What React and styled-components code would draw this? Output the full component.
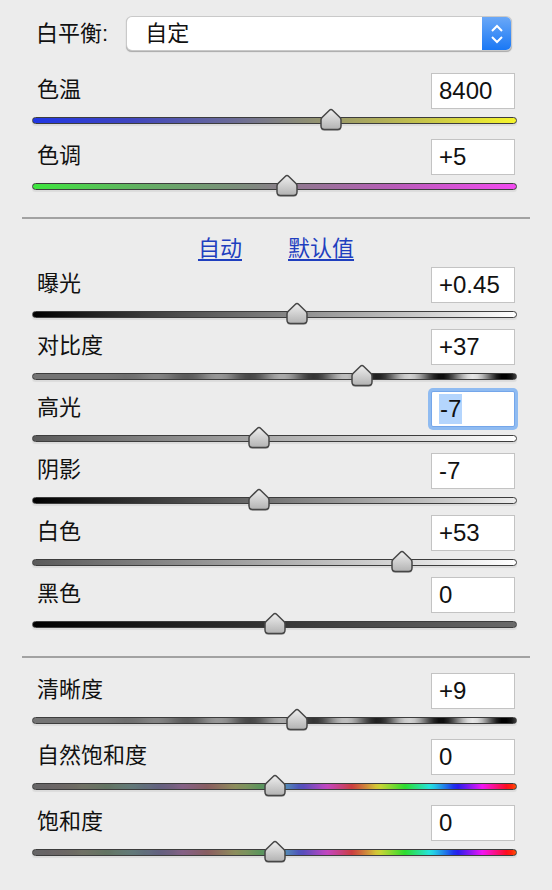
import styled, { createGlobalStyle } from "styled-components";

const GlobalStyle = createGlobalStyle`
  html, body {
    margin: 0;
    padding: 0;
    background: #ececec;
  }
  body {
    font-family: "Liberation Sans", "Noto Sans CJK SC", sans-serif;
    color: #111;
  }
`;

// stripes that get stronger toward the right (contrast / clarity)
const stripeTrack = () => {
  const stops = [];
  for (let i = 0; i <= 100; i++) {
    const t = i / 100;
    const amp = Math.max(0, t - 0.15) * 150;
    let v = 116 + amp * Math.cos((2 * Math.PI * (t - 0.25)) / 0.132);
    v = Math.round(Math.min(255, Math.max(0, v)));
    stops.push(`rgb(${v},${v},${v}) ${i}%`);
  }
  return `linear-gradient(to right, ${stops.join(", ")})`;
};

// muted hues on the left, full rainbow on the right (vibrance / saturation)
const hueTrack = () => {
  const stops = [];
  for (let i = 0; i <= 100; i++) {
    const t = i / 100;
    let hue, sat, light;
    if (t < 0.5) {
      hue = 220 + (t - 0.24) * 1125;
      sat = t * 50;
      light = 40 + t * 15;
    } else {
      hue = 225 + (t - 0.54) * 1114;
      sat = Math.min(100, 40 + (t - 0.52) * 125);
      light = 52;
    }
    hue = ((hue % 360) + 360) % 360;
    stops.push(`hsl(${hue.toFixed(0)}, ${sat.toFixed(0)}%, ${light.toFixed(0)}%) ${i}%`);
  }
  return `linear-gradient(to right, ${stops.join(", ")})`;
};

const temp =
  "linear-gradient(to right, #2137e4 0%, #3f45bf 20%, #6c6c96 42%, #8a8a78 55%, #b0ae58 72%, #f6f52c 100%)";
const tint =
  "linear-gradient(to right, #3fe63f 0%, #62b062 22%, #7f8a7f 45%, #917891 55%, #b95cb9 75%, #f24bf0 100%)";
const stripes = stripeTrack();
const hues = hueTrack();

const basicRows = [
  { label: "色温", value: "8400", pos: 0.616, track: temp },
  { label: "色调", value: "+5", pos: 0.526, track: tint },
];

const toneRows = [
  { label: "曝光", value: "+0.45", pos: 0.546, track: "linear-gradient(to right, #000, #fff)" },
  { label: "对比度", value: "+37", pos: 0.682, track: stripes },
  { label: "高光", value: "-7", pos: 0.468, track: "linear-gradient(to right, #5a5a5a, #fff)", focused: true },
  { label: "阴影", value: "-7", pos: 0.468, track: "linear-gradient(to right, #000, #ececec)" },
  { label: "白色", value: "+53", pos: 0.763, track: "linear-gradient(to right, #5a5a5a, #fff)" },
  { label: "黑色", value: "0", pos: 0.501, track: "linear-gradient(to right, #000, #6a6a6a)" },
];

const presenceRows = [
  { label: "清晰度", value: "+9", pos: 0.546, track: stripes },
  { label: "自然饱和度", value: "0", pos: 0.501, track: hues },
  { label: "饱和度", value: "0", pos: 0.501, track: hues },
];

const ThumbIcon = () => (
  <svg width="24" height="26" viewBox="0 0 24 26">
    <defs>
      <linearGradient id="thumbFill" x1="0" y1="0" x2="0" y2="1">
        <stop offset="0" stopColor="#efefef" />
        <stop offset="1" stopColor="#b2b2b2" />
      </linearGradient>
    </defs>
    <path
      d="M12 3C12.8 3 13.3 3.5 13.8 4L21 11Q22 12 22 13.5V19.5Q22 23 18.5 23H5.5Q2 23 2 19.5V13.5Q2 12 3 11L10.2 4C10.7 3.5 11.2 3 12 3Z"
      fill="rgba(0,0,0,0.22)"
    />
    <path
      d="M12 1.5C12.8 1.5 13.3 2 13.8 2.5L21 9.5Q22 10.5 22 12V18Q22 21.5 18.5 21.5H5.5Q2 21.5 2 18V12Q2 10.5 3 9.5L10.2 2.5C10.7 2 11.2 1.5 12 1.5Z"
      fill="url(#thumbFill)"
      stroke="#464646"
      strokeWidth="1.5"
    />
  </svg>
);

const SliderRow = ({ label, value, pos, track, focused }) => (
  <Row>
    <RowTop>
      <Label>{label}</Label>
      <ValueBox $focused={focused}>
        {focused ? <Selected>{value}</Selected> : value}
      </ValueBox>
    </RowTop>
    <Track $bg={track}>
      <Thumb style={{ left: `calc(${pos * 100}% - 12px)` }}>
        <ThumbIcon />
      </Thumb>
    </Track>
  </Row>
);

const App = () => (
  <Page>
    <GlobalStyle />
    <Header>
      <HeaderLabel>白平衡:</HeaderLabel>
      <Select>
        <SelectValue>自定</SelectValue>
        <Stepper>
          <svg width="12" height="20" viewBox="0 0 12 20">
            <polyline points="1,7 6,2 11,7" fill="none" stroke="#fff" strokeWidth="2" />
            <polyline points="1,13 6,18 11,13" fill="none" stroke="#fff" strokeWidth="2" />
          </svg>
        </Stepper>
      </Select>
    </Header>

    <Section $gap={15} $top={23}>
      {basicRows.map((r) => (
        <SliderRow key={r.label} {...r} />
      ))}
    </Section>

    <Divider $top={27} />

    <Links>
      <LinkText>自动</LinkText>
      <LinkText>默认值</LinkText>
    </Links>

    <Section $gap={11}>
      {toneRows.map((r) => (
        <SliderRow key={r.label} {...r} />
      ))}
    </Section>

    <Divider $top={28} />

    <Section $gap={15} $top={15}>
      {presenceRows.map((r) => (
        <SliderRow key={r.label} {...r} />
      ))}
    </Section>
  </Page>
);

export default App;

const Page = styled.div`
  width: 552px;
  box-sizing: border-box;
  padding: 17px 22px 40px;
`;

const Header = styled.div`
  display: flex;
  align-items: center;
  gap: 19px;
  padding: 0 19px 0 14px;
  height: 33px;
`;

const HeaderLabel = styled.span`
  font-size: 22px;
  line-height: 1;
`;

const Select = styled.div`
  flex: 1;
  height: 33px;
  display: flex;
  align-items: center;
  background: #fff;
  border-radius: 5px;
  overflow: hidden;
  box-shadow: 0 0 0 1px #c9c9c9, 0 1px 1px 0.5px #a9a9a9;
`;

const SelectValue = styled.span`
  flex: 1;
  padding-left: 18px;
  font-size: 22px;
  line-height: 1;
`;

const Stepper = styled.div`
  width: 29px;
  height: 100%;
  display: flex;
  align-items: center;
  justify-content: center;
  background: linear-gradient(to bottom, #6aa8f7, #1a78f5);
`;

const Section = styled.div`
  display: flex;
  flex-direction: column;
  gap: ${(p) => p.$gap}px;
  margin-top: ${(p) => p.$top || 0}px;
  padding: 0 13px 0 10px;
`;

const Row = styled.div`
  display: flex;
  flex-direction: column;
  gap: 8px;
`;

const RowTop = styled.div`
  display: flex;
  align-items: center;
  justify-content: space-between;
  padding: 0 2px 0 5px;
`;

const Label = styled.span`
  font-size: 22px;
  line-height: 1;
  margin-top: -3px;
`;

const ValueBox = styled.div`
  width: 84px;
  height: 36px;
  box-sizing: border-box;
  display: flex;
  align-items: center;
  padding-left: 7px;
  background: #fff;
  border: 1px solid ${(p) => (p.$focused ? "#74a6ea" : "#c3c3c3")};
  border-radius: ${(p) => (p.$focused ? "2px" : "0")};
  box-shadow: ${(p) => (p.$focused ? "0 0 0 3px #8fbbf1" : "none")};
  font-size: 24px;
  color: #111;
`;

const Selected = styled.span`
  background: #b4d5fd;
  padding: 1px 1px;
  line-height: 28px;
`;

const Track = styled.div`
  position: relative;
  height: 7px;
  box-sizing: border-box;
  border: 1px solid #3d3d3d;
  border-top-width: 1.5px;
  border-radius: 4px;
  background: ${(p) => p.$bg};
  box-shadow: 0 2px 1px rgba(0, 0, 0, 0.07);
`;

const Thumb = styled.div`
  position: absolute;
  top: -10px;
  width: 24px;
  height: 26px;
  line-height: 0;
`;

const Divider = styled.div`
  height: 2px;
  background: #a2a2a2;
  margin-top: ${(p) => p.$top}px;
`;

const Links = styled.div`
  display: flex;
  justify-content: center;
  gap: 46px;
  padding: 16px 0 4px;
  line-height: 28px;
`;

const LinkText = styled.a`
  font-size: 22px;
  color: #1f3fbf;
  text-decoration: underline;
  text-underline-offset: 3px;
  cursor: pointer;
`;
